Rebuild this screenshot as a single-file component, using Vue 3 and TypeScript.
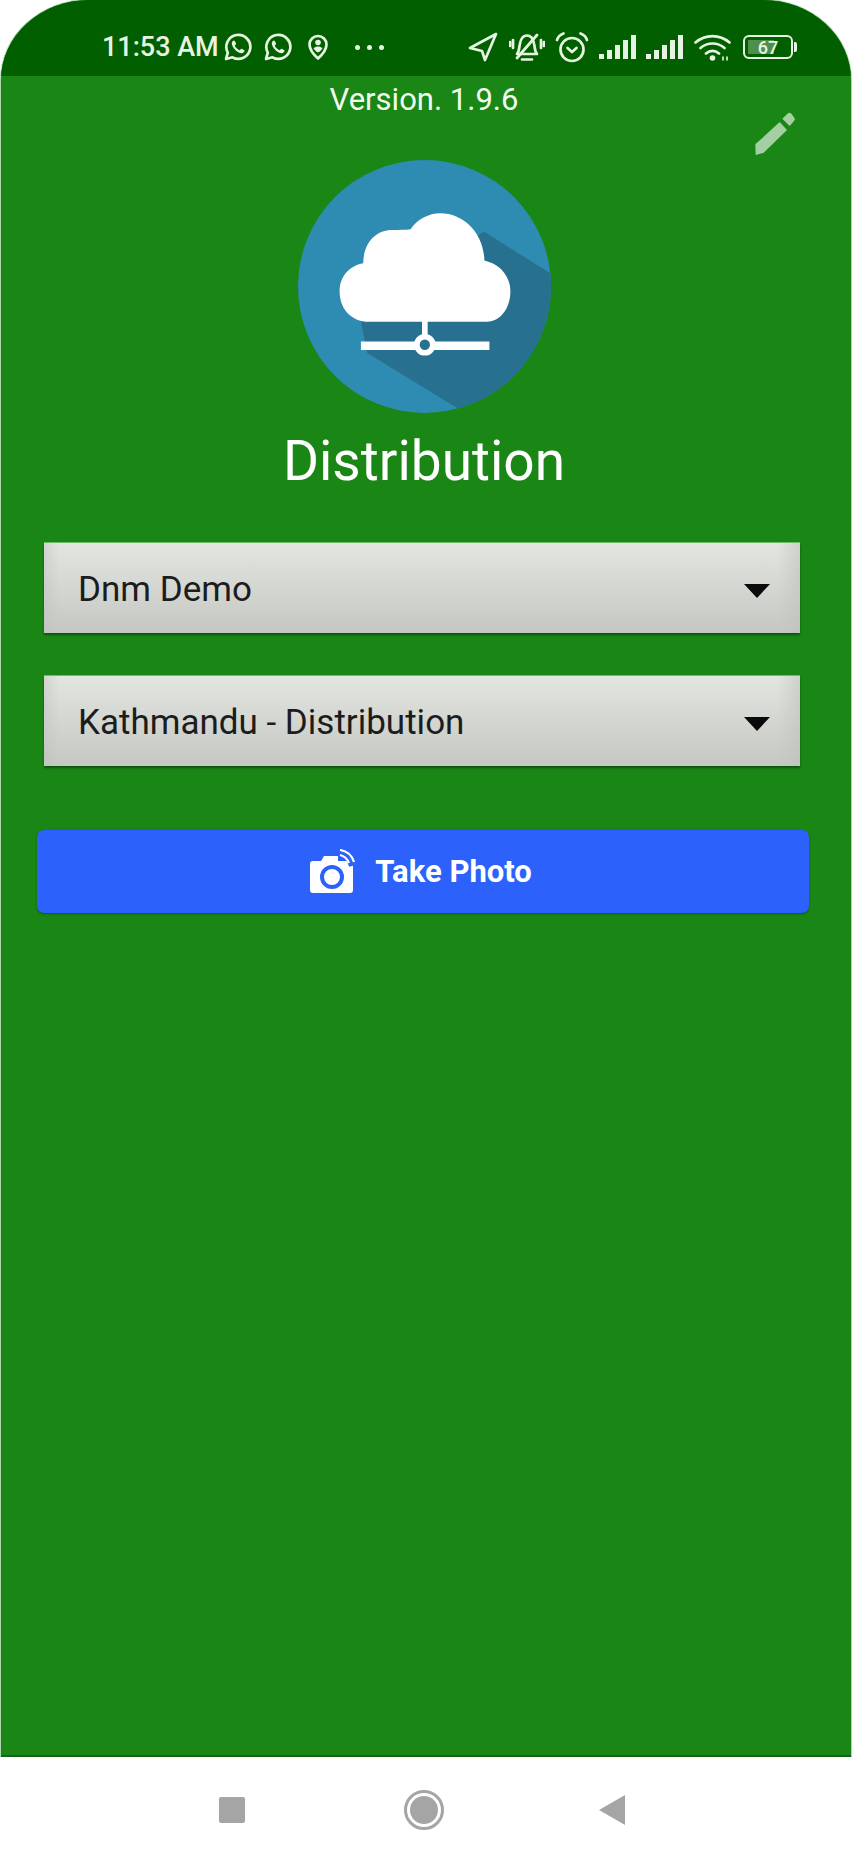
<script setup lang="ts">
const selects = ['Dnm Demo', 'Kathmandu - Distribution']
const signalBars = [5, 9, 14, 19, 24]
</script>

<template>
  <div class="phone">
    <div class="screen">
      <header class="status-bar">
        <div class="status-left">
          <span class="clock">11:53 AM</span>
          <svg class="wa" viewBox="0 0 28 28">
            <path class="line" d="M2 26l1.800-6.400A12 12 0 1 1 8.400 24.300z" />
            <path class="solid" d="M10 7.500c-.8 0-2.200 1.100-2.200 3 0 3.800 5.700 9.700 9.800 9.700 1.800 0 2.900-1.300 3-2.400 0-.5-2.700-2-3.300-2-.5 0-1.100 1.400-1.700 1.400-1.300 0-4.800-3.400-4.800-4.600 0-.6 1.300-1.100 1.300-1.700 0-.6-1.300-3.400-2.100-3.400z" />
          </svg>
          <svg class="wa second" viewBox="0 0 28 28">
            <path class="line" d="M2 26l1.800-6.400A12 12 0 1 1 8.400 24.300z" />
            <path class="solid" d="M10 7.500c-.8 0-2.200 1.100-2.200 3 0 3.800 5.700 9.700 9.800 9.700 1.800 0 2.900-1.300 3-2.400 0-.5-2.700-2-3.300-2-.5 0-1.100 1.400-1.700 1.400-1.300 0-4.800-3.400-4.800-4.600 0-.6 1.300-1.100 1.300-1.700 0-.6-1.300-3.400-2.100-3.400z" />
          </svg>
          <svg class="pin" viewBox="0 0 20 26">
            <path class="line" d="M10 24.500C5 20 1.500 15.500 1.500 10.500a8.500 8.500 0 0 1 17 0c0 5-3.500 9.500-8.500 14z" />
            <circle class="solid" cx="10" cy="8.500" r="2.800" />
            <path class="solid" d="M5.500 14.500c1.300-1.300 2.900-1.900 4.500-1.900s3.200.6 4.500 1.900C13.500 16 12 17.500 10 18.500 8 17.500 6.500 16 5.500 14.500z" />
          </svg>
          <span class="dots"><i></i><i></i><i></i></span>
        </div>
        <div class="status-right">
          <svg class="nav-arrow" viewBox="0 0 30 30">
            <path class="line" d="M28 2L2 16l12 3 3 9z" />
          </svg>
          <svg class="bell" viewBox="0 0 36 30">
            <path class="line" d="M8 22c2.500-2.500 2-7 3-10.500C12 6 15 3.500 18 3.500s6 2.500 7 8c1 3.500.5 8 3 10.500z" />
            <path class="line" d="M13 27.500h10M28 3L8 26M4 8v8M1 10v4M32 8v8M35 10v4" />
          </svg>
          <svg class="alarm" viewBox="0 0 34 32">
            <circle class="line" cx="17" cy="18.500" r="11.500" />
            <path class="line" d="M12.500 17l4.500 4 4.500-4M2 9c1-3 3.500-5.500 6.500-6.500M32 9c-1-3-3.500-5.500-6.500-6.500" />
          </svg>
          <div v-for="n in 2" :key="n" class="signal">
            <span v-for="h in signalBars" :key="h" :style="{ height: h + 'px' }"></span>
          </div>
          <svg class="wifi" viewBox="0 0 37 28">
            <path class="line" d="M1.500 9.500c10-8.500 24-8.500 34 0M6.500 15c7-6 17-6 24 0M12 20.500c4-3.400 9-3.400 13 0" />
            <circle class="solid" cx="18.500" cy="25" r="2.800" />
            <path class="line thin" d="M29 27v-3M33 27v-3" />
          </svg>
          <div class="battery">
            <div class="battery-body">
              <span class="battery-fill" :style="{ width: '56%' }"></span>
              <span class="battery-text">67</span>
            </div>
            <span class="battery-cap"></span>
          </div>
        </div>
      </header>

      <main class="content">
        <p class="version">Version. 1.9.6</p>
        <svg class="edit" viewBox="980 335 135 135">
          <path d="M987 435L1060 368 1082 392 1012 460 988 467z" />
          <path d="M1068 358L1085 342Q1090 338 1095 343L1104 355Q1108 360 1103 365L1090 380z" />
        </svg>

        <svg class="logo" viewBox="82 60 760 760">
          <defs>
            <clipPath id="logo-clip"><circle cx="462" cy="440" r="380" /></clipPath>
          </defs>
          <circle cx="462" cy="440" r="380" fill="#2e8bb1" />
          <path clip-path="url(#logo-clip)" d="M640 275L900 438V900H700L560 805 290 640 270 540z" fill="#27708f" />
          <path fill="#fff" d="M295 546C240 546 207 505 207 455 207 410 235 378 278 370 278 310 315 270 365 270 385 270 405 270 420 268 440 238 475 220 510 220 580 220 640 280 642 362 685 372 720 405 720 455 720 505 690 546 650 546z" />
          <path fill="none" stroke="#fff" stroke-width="17" d="M463 540V590" />
          <path fill="none" stroke="#fff" stroke-width="25" d="M271 618H436M490 618H657" />
          <circle cx="463" cy="615" r="24" fill="#27708f" stroke="#fff" stroke-width="17" />
        </svg>

        <h1 class="title">Distribution</h1>

        <form class="form" @submit.prevent>
          <div v-for="item in selects" :key="item" class="select">
            <span>{{ item }}</span>
            <i class="caret"></i>
          </div>
          <button class="photo-btn" type="button">
            <svg class="camera" viewBox="0 0 45 45">
              <path fill="#fff" d="M3 12h8l3-5h14v5h12c2 0 3 1 3 3v26c0 2-1 3-3 3H3c-2 0-3-1-3-3V15c0-2 1-3 3-3z" />
              <circle cx="22" cy="28" r="10" fill="#fff" stroke="#2c62fb" stroke-width="4" />
              <path fill="none" stroke="#2c62fb" stroke-width="6" d="M27 4c8 0 13 5 15 13" />
              <path fill="none" stroke="#fff" stroke-width="2.200" d="M30 1c7 1 12 6 14 12M30 6c4 1 7 3 9 8" />
            </svg>
            <span>Take Photo</span>
          </button>
        </form>
      </main>
    </div>

    <footer class="nav-bar">
      <span class="nav-square"></span>
      <span class="nav-home"></span>
      <span class="nav-back"></span>
    </footer>
  </div>
</template>

<style>
html,
body {
  margin: 0;
  background: #fff;
}
</style>

<style scoped>
.phone {
  display: flex;
  flex-direction: column;
  width: 852px;
  height: 1853px;
  background: #fff;
  font-family: Roboto, "Liberation Sans", sans-serif;
}

.screen {
  display: flex;
  flex: 1;
  flex-direction: column;
  margin-left: 1px;
  margin-right: 1px;
  overflow: hidden;
  border-radius: 88px 88px 0 0 / 80px 80px 0 0;
  background: #1a8616;
  box-shadow: inset 0 -2px 0 #14641a, 0 0 0 1px rgba(26, 134, 22, 0.35);
}

.status-bar {
  display: flex;
  flex: none;
  align-items: center;
  justify-content: space-between;
  height: 76px;
  padding: 18px 54px 0 101px;
  box-sizing: border-box;
  background: #025f00;
  color: #e6f5e2;
}

.status-left,
.status-right {
  display: flex;
  align-items: center;
}

.clock {
  font-size: 27px;
  font-weight: 500;
}

.line {
  fill: none;
  stroke: #e6f5e2;
  stroke-width: 2.700;
  stroke-linejoin: round;
  stroke-linecap: round;
}

.thin {
  stroke-width: 1.600;
}

.solid {
  fill: #e6f5e2;
}

.wa {
  width: 28px;
  height: 28px;
  margin-left: 5px;
}

.wa.second {
  margin-left: 12px;
}

.pin {
  width: 20px;
  height: 26px;
  margin-left: 16px;
}

.dots {
  display: flex;
  gap: 7px;
  margin-left: 27px;
}

.dots i {
  width: 5px;
  height: 5px;
  border-radius: 50%;
  background: #e6f5e2;
}

.nav-arrow {
  width: 30px;
  height: 30px;
}

.bell {
  width: 36px;
  height: 30px;
  margin-left: 11px;
}

.alarm {
  width: 34px;
  height: 32px;
  margin-left: 10px;
}

.signal {
  display: flex;
  align-items: flex-end;
  gap: 3px;
  height: 24px;
  margin-left: 10px;
}

.signal + .signal {
  margin-left: 10px;
}

.signal span {
  width: 5px;
  background: #e6f5e2;
}

.wifi {
  width: 37px;
  height: 28px;
  margin-left: 11px;
}

.battery {
  display: flex;
  align-items: center;
  margin-left: 12px;
}

.battery-body {
  position: relative;
  display: flex;
  align-items: center;
  justify-content: center;
  width: 50px;
  height: 24px;
  box-sizing: border-box;
  border: 2px solid #e6f5e2;
  border-radius: 6px;
}

.battery-fill {
  position: absolute;
  top: 3px;
  bottom: 3px;
  left: 3px;
  background: #4f8f4c;
}

.battery-text {
  position: relative;
  color: #e6f5e2;
  font-size: 18px;
  font-weight: 500;
}

.battery-cap {
  width: 3px;
  height: 10px;
  margin-left: 1px;
  border-radius: 0 2px 2px 0;
  background: #e6f5e2;
}

.content {
  position: relative;
  display: flex;
  flex: 1;
  flex-direction: column;
  align-items: center;
}

.version {
  margin: 8px 0 0 -4px;
  color: #f2fbf0;
  font-size: 31px;
  line-height: 32px;
}

.edit {
  position: absolute;
  top: 35px;
  left: 752px;
  width: 45px;
  height: 45px;
  fill: #a4cfa2;
}

.logo {
  width: 253px;
  height: 253px;
  margin-top: 44px;
  margin-left: -4px;
}

.title {
  margin: 18px 0 0 -4px;
  color: #fff;
  font-size: 55px;
  font-weight: 400;
  line-height: 60px;
}

.form {
  display: flex;
  flex-direction: column;
  align-self: stretch;
  margin-top: 52px;
  padding: 0 42px 0 36px;
}

.select {
  display: flex;
  align-items: center;
  justify-content: space-between;
  height: 90px;
  margin: 0 9px 43px 7px;
  padding: 2px 30px 0 34px;
  box-sizing: border-box;
  background:
    linear-gradient(90deg, rgba(190, 192, 187, 0.45), transparent 2%, transparent 97%, rgba(190, 192, 187, 0.55)),
    linear-gradient(180deg, #e3e5e0, #c5c7c2);
  box-shadow: 0 2px 2px rgba(0, 40, 0, 0.55), 0 -1px 0 rgba(200, 240, 190, 0.5);
  color: #1c1c1c;
  font-size: 35px;
}

.caret {
  width: 0;
  height: 0;
  margin-top: 3px;
  border-top: 14px solid #0a0a0a;
  border-right: 13px solid transparent;
  border-left: 13px solid transparent;
}

.photo-btn {
  display: flex;
  align-items: center;
  justify-content: center;
  gap: 20px;
  height: 83px;
  margin-top: 21px;
  padding: 0 4px 0 0;
  border: 0;
  border-radius: 7px;
  background: #2c62fb;
  box-shadow: 0 1px 2px rgba(0, 40, 0, 0.45);
  color: #fff;
  font-family: inherit;
  font-size: 31px;
  font-weight: 700;
}

.camera {
  width: 45px;
  height: 45px;
}

.nav-bar {
  position: relative;
  flex: none;
  height: 96px;
  background: #fff;
}

.nav-square {
  position: absolute;
  top: 40px;
  left: 219px;
  width: 26px;
  height: 26px;
  border-radius: 2px;
  background: #a5a5a5;
}

.nav-home {
  position: absolute;
  top: 33px;
  left: 404px;
  width: 40px;
  height: 40px;
  box-sizing: border-box;
  border: 3px solid #a5a5a5;
  border-radius: 50%;
  background: #a5a5a5;
  background-clip: content-box;
  padding: 3px;
}

.nav-back {
  position: absolute;
  top: 38px;
  left: 599px;
  width: 0;
  height: 0;
  border-top: 15px solid transparent;
  border-right: 26px solid #a5a5a5;
  border-bottom: 15px solid transparent;
}
</style>
